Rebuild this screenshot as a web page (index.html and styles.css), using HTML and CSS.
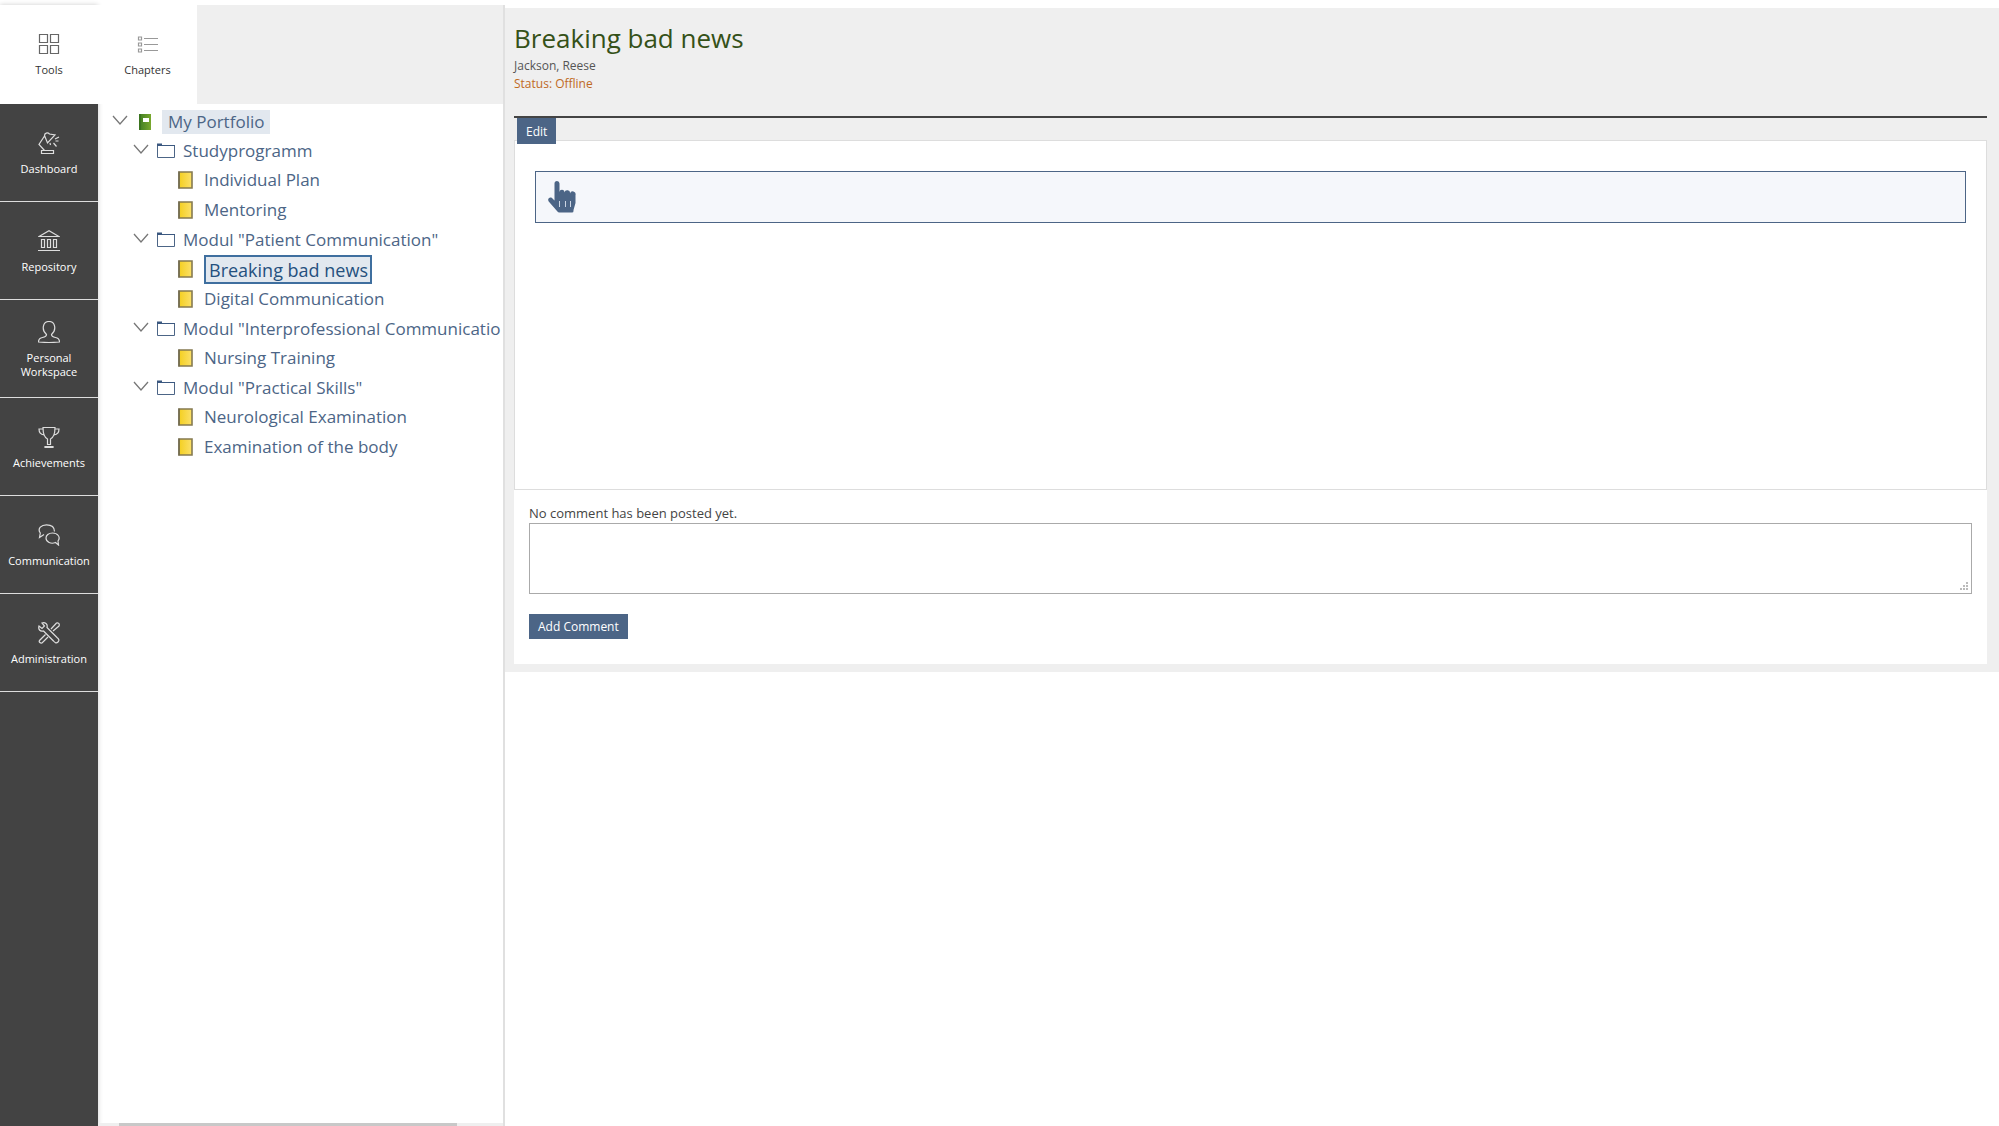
FILE: index.html
```html
<!DOCTYPE html>
<html lang="en">
<head>
<meta charset="utf-8">
<meta name="viewport" content="width=device-width, initial-scale=1">
<title>Breaking bad news</title>
<link rel="stylesheet" href="styles.css">
</head>
<body>
<svg class="sprite" aria-hidden="true">
  <defs>
    <linearGradient id="yellow"><stop offset="0" stop-color="#f4cf1f"/><stop offset="1" stop-color="#fbe06a"/></linearGradient>
    <linearGradient id="green"><stop offset="0" stop-color="#3f7d22"/><stop offset="1" stop-color="#79a82e"/></linearGradient>
  </defs>
  <symbol id="chevron" viewBox="0 0 16 10"><path d="M1 1l7 8 7-8" fill="none" stroke="#777" stroke-width="1.3"/></symbol>
  <symbol id="folder" viewBox="0 0 18 15"><path d="M.5 2.500h17v12H.5z" fill="#fff" stroke="#4c6586"/><path d="M0 .5h5V2h13v1H0z" fill="#3b5880"/></symbol>
  <symbol id="page" viewBox="0 0 15 18"><path d="M1 1h13v16H1z" fill="url(#yellow)" stroke="#857a50" stroke-width="1.6"/><path d="M1 .5v17" stroke="#66624f" stroke-width="1.200"/></symbol>
  <symbol id="book" viewBox="0 0 12 16"><path d="M0 0h12v16H0z" fill="url(#green)"/><path d="M0 0h2v16H0z" fill="#3b741f"/><path d="M4 4h6v4H4z" fill="#fff"/></symbol>
</svg>
<div class="app">
  <nav class="mainbar" aria-label="Main">
    <button class="entry engaged" type="button">
      <svg viewBox="0 0 22 22"><path d="M1.500 1.500h8v8h-8zM12.500 1.500h8v8h-8zM1.500 12.500h8v8h-8zM12.500 12.500h8v8h-8z"/></svg>
      <span>Tools</span></button>
    <button class="entry" type="button">
      <svg viewBox="0 0 22 22"><path d="M3.500 18.500h12v3h-12zM6.500 18.500L1 12.500 6.500 4M6.500 3.500c0-2.500 3-3.500 5-1.500l5.500 1L9.500 11zM17 7l4-2M17.500 9h3M15.500 11l3 3.500M12 11l.5 2"/></svg>
      <span>Dashboard</span></button>
    <button class="entry" type="button">
      <svg viewBox="0 0 22 22"><path d="M1 6.500L11 .700 21 6.500zM3.500 9.500h3v8h-3zM9.500 9.500h3v8h-3zM15.500 9.500h3v8h-3zM0 20.500h22"/></svg>
      <span>Repository</span></button>
    <button class="entry" type="button">
      <svg viewBox="0 0 22 22"><path d="M8.500 13.500C3 8.500 5 .500 11 .500s8 8 2.500 13c0 2 1.500 2.500 4 3s4 2 4 4.500q-10.500 1-21 0c0-2.500 1.500-4 4-4.500s4-1 4-3z"/></svg>
      <span>Personal Workspace</span></button>
    <button class="entry" type="button">
      <svg viewBox="0 0 22 22"><path d="M5 1.500h12c0 7-1.500 10-4.500 11.500v5.500h-3V13C6.500 11.500 5 8.500 5 1.500zM5 3H1c0 4 2 5.500 5 6M17 3h4c0 4-2 5.500-5 6M7 20.500h8v1H7z"/></svg>
      <span>Achievements</span></button>
    <button class="entry" type="button">
      <svg viewBox="0 0 22 22"><path d="M6 10.500l-4.500 3 .8-4.500C-1 4.500 3.500.800 8.500.800c5 0 8 2.500 8 6.700M17.500 18.500l3 2.500-.5-4c3-4-.5-8-5.500-8-4 0-6.500 2.500-6.500 5 0 4 5 6.500 9.500 4.500z"/></svg>
      <span>Communication</span></button>
    <button class="entry" type="button">
      <svg viewBox="0 0 22 22"><path d="M4 1c3-1 6 1 5 4.500l10 10c2 1.500 2.500 3 1 4.500s-3 1-4.500-1L5.500 9C2 10 0 7 1 4l3 2.500L6.500 4zM13 7l5.500-6C20 .200 22 2 21 4l-6 5M7.500 12.500l-6 6c-1 1.500 1 3 2.500 2.500l6-6"/></svg>
      <span>Administration</span></button>
  </nav>

  <aside class="slate" aria-label="Chapters">
    <div class="slate-head">
      <button class="entry chapters" type="button">
        <svg viewBox="0 0 22 22"><path d="M1.500 4h3v3h-3zM1.500 10h3v3h-3zM1.500 16h3v3h-3zM7 5.500h14M7 11.500h14M7 17.500h14"/></svg>
        <span>Chapters</span></button>
    </div>
    <div class="tree">
      <div class="row root"><button class="toggle" type="button" aria-label="Collapse"><svg><use href="#chevron"/></svg></button><svg class="ic-book"><use href="#book"/></svg><a class="marked" href="#">My Portfolio</a></div>
      <ul>
        <li>
          <div class="row"><button class="toggle" type="button" aria-label="Collapse"><svg><use href="#chevron"/></svg></button><svg class="ic-folder"><use href="#folder"/></svg><a href="#">Studyprogramm</a></div>
          <ul>
            <li class="row leaf"><svg class="ic-page"><use href="#page"/></svg><a href="#">Individual Plan</a></li>
            <li class="row leaf"><svg class="ic-page"><use href="#page"/></svg><a href="#">Mentoring</a></li>
          </ul>
        </li>
        <li>
          <div class="row"><button class="toggle" type="button" aria-label="Collapse"><svg><use href="#chevron"/></svg></button><svg class="ic-folder"><use href="#folder"/></svg><a href="#">Modul "Patient Communication"</a></div>
          <ul>
            <li class="row leaf"><svg class="ic-page"><use href="#page"/></svg><a class="current" href="#" aria-current="page">Breaking bad news</a></li>
            <li class="row leaf"><svg class="ic-page"><use href="#page"/></svg><a href="#">Digital Communication</a></li>
          </ul>
        </li>
        <li>
          <div class="row"><button class="toggle" type="button" aria-label="Collapse"><svg><use href="#chevron"/></svg></button><svg class="ic-folder"><use href="#folder"/></svg><a href="#">Modul "Interprofessional Communicatio</a></div>
          <ul>
            <li class="row leaf"><svg class="ic-page"><use href="#page"/></svg><a href="#">Nursing Training</a></li>
          </ul>
        </li>
        <li>
          <div class="row"><button class="toggle" type="button" aria-label="Collapse"><svg><use href="#chevron"/></svg></button><svg class="ic-folder"><use href="#folder"/></svg><a href="#">Modul "Practical Skills"</a></div>
          <ul>
            <li class="row leaf"><svg class="ic-page"><use href="#page"/></svg><a href="#">Neurological Examination</a></li>
            <li class="row leaf"><svg class="ic-page"><use href="#page"/></svg><a href="#">Examination of the body</a></li>
          </ul>
        </li>
      </ul>
    </div>
    <div class="scrolltrack"><div class="thumb"></div></div>
  </aside>

  <main class="content">
    <header class="page-head">
      <h1>Breaking bad news</h1>
      <p class="author">Jackson, Reese</p>
      <p class="status">Status: Offline</p>
    </header>
    <div class="toolbar"><button class="btn edit" type="button">Edit</button></div>
    <section class="sheet">
      <button class="insert" type="button" aria-label="Insert">
        <svg viewBox="0 0 28 32"><path d="M6.500 2.500a2.500 2.500 0 0 1 5 0V11a2.500 2.500 0 0 1 5 .5 2.500 2.500 0 0 1 5.500 1 2.500 2.500 0 0 1 5.500 1.500v8L25.500 29v1q0 1.500-1.500 1.500H11.500Q10 31.500 9 30L.700 20.500C-1 18 1.500 15.500 4 17l2.500 2.500z" fill="#4c6586"/><path d="M11.500 20v6M17.500 20v6M22.500 20v6" stroke="#cdd6e4" stroke-width="1"/></svg>
      </button>
    </section>
    <form class="comments">
      <label for="comment">No comment has been posted yet.</label>
      <div class="field">
        <textarea id="comment"></textarea>
        <svg class="grip" viewBox="0 0 8 9" aria-hidden="true"><path d="M1 6v3M4 3v6M7 0v9" stroke="#bbb" stroke-width="2" stroke-dasharray="2 1"/></svg>
      </div>
      <button class="btn" type="button">Add Comment</button>
    </form>
  </main>
</div>
</body>
</html>
```
FILE: styles.css
```css
* { box-sizing: border-box; }

body {
  margin: 0;
  background: #fff;
  color: #444;
  font: 13px/18px "Open Sans", "Noto Sans", sans-serif;
}

button { font: inherit; cursor: pointer; }
ul { list-style: none; margin: 0; padding: 0; }
.sprite { position: absolute; width: 0; height: 0; }

.app {
  display: flex;
  align-items: flex-start;
  min-height: 100vh;
  padding-top: 5px;
}

/* main bar */
.mainbar {
  display: flex;
  flex-direction: column;
  align-self: stretch;
  flex: none;
  width: 98px;
  background: #434343;
  box-shadow: 0 0 5px rgba(0, 0, 0, .2);
}
.entry {
  display: flex;
  flex-direction: column;
  align-items: center;
  justify-content: center;
  gap: 8px;
  width: 98px;
  height: 98px;
  padding: 2px 0 0;
  border: 0;
  border-bottom: 1px solid #ddd;
  background: #434343;
  color: #fff;
  font-size: 11px;
  line-height: 14px;
}
.entry svg {
  width: 22px;
  height: 22px;
  fill: none;
  stroke: #ddd;
  stroke-width: 1.2;
}
.entry.engaged, .entry.chapters {
  height: 99px;
  border-color: #fff;
  background: #fff;
  color: #333;
}
.entry.engaged svg { stroke: #666; }
.entry.chapters { width: 99px; }
.entry.chapters svg { stroke: #999; }

/* chapter tree */
.slate {
  display: flex;
  flex-direction: column;
  align-self: stretch;
  flex: none;
  width: 407px;
  border-right: 2px solid #e0e0e0;
  overflow: hidden;
}
.slate-head { background: #efefef; }
.tree {
  flex: 1;
  padding: 3px 0 0 14px;
  font-size: 17px;
  line-height: 24px;
  white-space: nowrap;
}
.tree ul { padding-left: 21px; }
.row { display: flex; align-items: center; height: 29px; }
.row.leaf { height: 30px; padding-left: 24px; }
.row svg { display: block; flex: none; }
.row a { color: #4c6586; text-decoration: none; }
.toggle {
  flex: none;
  margin-right: 8px;
  padding: 0 0 4px;
  border: 0;
  background: none;
}
.toggle svg { width: 16px; height: 10px; }
.ic-folder { width: 18px; height: 15px; margin-right: 8px; }
.ic-page { width: 15px; height: 18px; margin-right: 11px; }
.ic-book { width: 12px; height: 16px; margin: 0 11px 0 3px; }
.row a.marked { padding: 0 6px; background: #e2e8ef; }
.row a.current {
  padding: 1px 2px 0 3px;
  border: 2px solid #3f6f9f;
  background: #e2e8ef;
  color: #25507e;
  font-size: 18px;
}
.scrolltrack { height: 3px; padding-left: 21px; background: #efefef; }
.thumb { width: 88%; height: 3px; background: #c8c8c8; }

/* content */
.content {
  flex: 1;
  min-width: 0;
  margin-top: 3px;
  padding: 13px 12px 8px 9px;
  background: #efefef;
}
.page-head { height: 97px; border-bottom: 2px solid #444; }
h1 {
  margin: 0 0 2px;
  color: #355118;
  font-size: 26px;
  font-weight: 400;
  line-height: 34px;
}
.page-head p { margin: 0; font-size: 12px; line-height: 18px; }
.page-head .author { color: #555; }
.page-head .status { color: #c06a1f; }

.btn {
  display: block;
  padding: 4px 9px 3px;
  border: 0;
  background: #4c6586;
  color: #fff;
  font-size: 12px;
  line-height: 18px;
}
.toolbar { height: 22px; padding-left: 3px; }
.edit { position: relative; height: 26px; }

.sheet {
  min-height: 350px;
  padding: 30px 20px;
  border: 1px solid #ddd;
  background: #fff;
}
.insert {
  display: flex;
  align-items: center;
  width: 100%;
  height: 52px;
  padding: 0 12px;
  border: 1px solid #4c6586;
  background: #f5f7fb;
}
.insert svg { width: 28px; height: 32px; }

.comments { padding: 14px 15px 25px; background: #fff; }
.comments label { display: block; margin-bottom: 1px; }
.field { position: relative; margin-bottom: 20px; }
textarea {
  display: block;
  width: 100%;
  height: 71px;
  border: 1px solid #aaa;
  background: #fff;
  font: inherit;
  resize: none;
}
.grip { position: absolute; right: 4px; bottom: 3px; width: 8px; height: 9px; }
```
